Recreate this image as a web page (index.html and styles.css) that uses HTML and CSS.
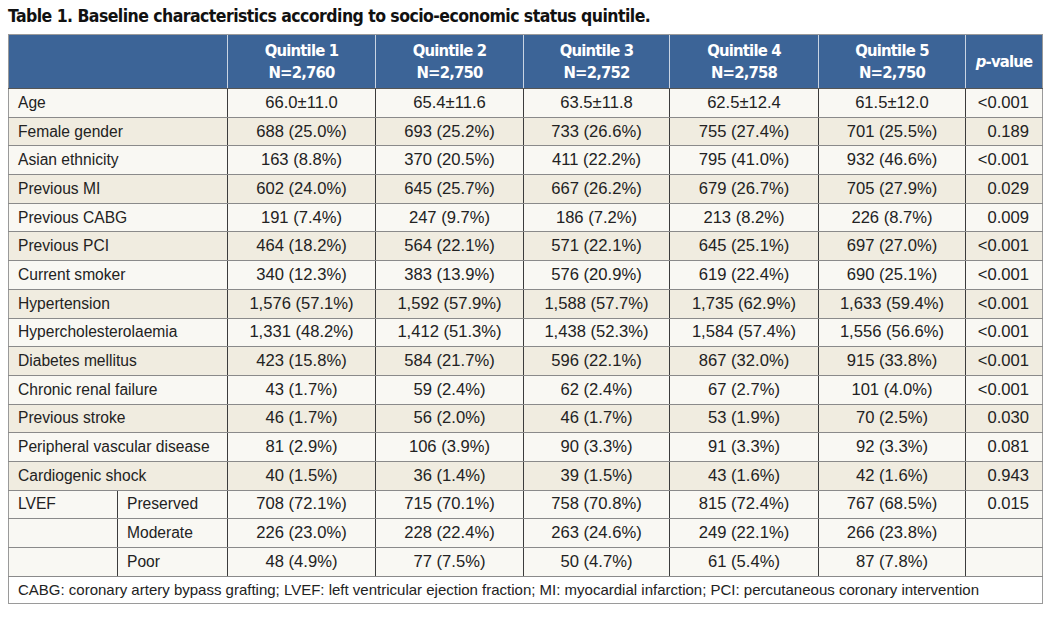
FILE: index.html
```html
<!DOCTYPE html>
<html>
<head>
<meta charset="utf-8">
<link rel="stylesheet" href="styles.css">
</head>
<body>
<h1 class="title">Table 1. Baseline characteristics according to socio-economic status quintile.</h1>
<table class="data">
<colgroup>
<col class="c-sub1"><col class="c-sub2"><col class="c-q"><col class="c-q"><col class="c-q3"><col class="c-q4"><col class="c-q5"><col class="c-p">
</colgroup>
<thead>
<tr class="head">
<th colspan="2"></th>
<th>Quintile 1<br>N=2,760</th>
<th>Quintile 2<br>N=2,750</th>
<th>Quintile 3<br>N=2,752</th>
<th>Quintile 4<br>N=2,758</th>
<th>Quintile 5<br>N=2,750</th>
<th><i>p</i>-value</th>
</tr>
</thead>
<tbody>
<tr class="lt"><td colspan="2" class="lab">Age</td><td>66.0±11.0</td><td>65.4±11.6</td><td>63.5±11.8</td><td>62.5±12.4</td><td>61.5±12.0</td><td class="p">&lt;0.001</td></tr>
<tr class="dk"><td colspan="2" class="lab">Female gender</td><td>688 (25.0%)</td><td>693 (25.2%)</td><td>733 (26.6%)</td><td>755 (27.4%)</td><td>701 (25.5%)</td><td class="p">0.189</td></tr>
<tr class="lt"><td colspan="2" class="lab">Asian ethnicity</td><td>163 (8.8%)</td><td>370 (20.5%)</td><td>411 (22.2%)</td><td>795 (41.0%)</td><td>932 (46.6%)</td><td class="p">&lt;0.001</td></tr>
<tr class="dk"><td colspan="2" class="lab">Previous MI</td><td>602 (24.0%)</td><td>645 (25.7%)</td><td>667 (26.2%)</td><td>679 (26.7%)</td><td>705 (27.9%)</td><td class="p">0.029</td></tr>
<tr class="lt"><td colspan="2" class="lab">Previous CABG</td><td>191 (7.4%)</td><td>247 (9.7%)</td><td>186 (7.2%)</td><td>213 (8.2%)</td><td>226 (8.7%)</td><td class="p">0.009</td></tr>
<tr class="dk"><td colspan="2" class="lab">Previous PCI</td><td>464 (18.2%)</td><td>564 (22.1%)</td><td>571 (22.1%)</td><td>645 (25.1%)</td><td>697 (27.0%)</td><td class="p">&lt;0.001</td></tr>
<tr class="lt"><td colspan="2" class="lab">Current smoker</td><td>340 (12.3%)</td><td>383 (13.9%)</td><td>576 (20.9%)</td><td>619 (22.4%)</td><td>690 (25.1%)</td><td class="p">&lt;0.001</td></tr>
<tr class="dk"><td colspan="2" class="lab">Hypertension</td><td>1,576 (57.1%)</td><td>1,592 (57.9%)</td><td>1,588 (57.7%)</td><td>1,735 (62.9%)</td><td>1,633 (59.4%)</td><td class="p">&lt;0.001</td></tr>
<tr class="lt"><td colspan="2" class="lab">Hypercholesterolaemia</td><td>1,331 (48.2%)</td><td>1,412 (51.3%)</td><td>1,438 (52.3%)</td><td>1,584 (57.4%)</td><td>1,556 (56.6%)</td><td class="p">&lt;0.001</td></tr>
<tr class="dk"><td colspan="2" class="lab">Diabetes mellitus</td><td>423 (15.8%)</td><td>584 (21.7%)</td><td>596 (22.1%)</td><td>867 (32.0%)</td><td>915 (33.8%)</td><td class="p">&lt;0.001</td></tr>
<tr class="lt"><td colspan="2" class="lab">Chronic renal failure</td><td>43 (1.7%)</td><td>59 (2.4%)</td><td>62 (2.4%)</td><td>67 (2.7%)</td><td>101 (4.0%)</td><td class="p">&lt;0.001</td></tr>
<tr class="dk"><td colspan="2" class="lab">Previous stroke</td><td>46 (1.7%)</td><td>56 (2.0%)</td><td>46 (1.7%)</td><td>53 (1.9%)</td><td>70 (2.5%)</td><td class="p">0.030</td></tr>
<tr class="lt"><td colspan="2" class="lab">Peripheral vascular disease</td><td>81 (2.9%)</td><td>106 (3.9%)</td><td>90 (3.3%)</td><td>91 (3.3%)</td><td>92 (3.3%)</td><td class="p">0.081</td></tr>
<tr class="dk"><td colspan="2" class="lab">Cardiogenic shock</td><td>40 (1.5%)</td><td>36 (1.4%)</td><td>39 (1.5%)</td><td>43 (1.6%)</td><td>42 (1.6%)</td><td class="p">0.943</td></tr>
<tr class="lt"><td class="lab">LVEF</td><td class="lab">Preserved</td><td>708 (72.1%)</td><td>715 (70.1%)</td><td>758 (70.8%)</td><td>815 (72.4%)</td><td>767 (68.5%)</td><td class="p">0.015</td></tr>
<tr class="lt"><td class="lab"></td><td class="lab">Moderate</td><td>226 (23.0%)</td><td>228 (22.4%)</td><td>263 (24.6%)</td><td>249 (22.1%)</td><td>266 (23.8%)</td><td class="p"></td></tr>
<tr class="lt"><td class="lab"></td><td class="lab">Poor</td><td>48 (4.9%)</td><td>77 (7.5%)</td><td>50 (4.7%)</td><td>61 (5.4%)</td><td>87 (7.8%)</td><td class="p"></td></tr>
</tbody>
<tfoot>
<tr class="foot"><td colspan="8">CABG: coronary artery bypass grafting; LVEF: left ventricular ejection fraction; MI: myocardial infarction; PCI: percutaneous coronary intervention</td></tr>
</tfoot>
</table>
</body>
</html>
```
FILE: styles.css
```css
html, body {
  margin: 0;
  padding: 0;
  background: #ffffff;
}
body {
  padding: 0 8px;
  font-family: "Liberation Sans", Arial, sans-serif;
  color: #222222;
}
.title {
  margin: 0;
  padding-top: 5px;
  height: 28px;
  box-sizing: border-box;
  font-family: "DejaVu Sans Condensed", "DejaVu Sans", sans-serif;
  font-stretch: condensed;
  font-weight: bold;
  font-size: 17.5px;
  line-height: 22px;
  letter-spacing: -0.55px;
  color: #111111;
}
.data {
  border-collapse: collapse;
  table-layout: fixed;
  width: 1034px;
  margin-top: 6px;
  border: 1px solid #9a9a9a;
  font-size: 16.6px;
}
.c-sub1 { width: 109px; }
.c-sub2 { width: 110px; }
.c-q { width: 148px; }
.c-q3 { width: 146px; }
.c-q4 { width: 149px; }
.c-q5 { width: 147px; }
.c-p { width: 77px; }
.head th {
  background: #3c6497;
  color: #ffffff;
  height: 53px;
  padding: 0;
  font-family: "DejaVu Sans Condensed", "DejaVu Sans", sans-serif;
  font-stretch: condensed;
  font-weight: bold;
  font-size: 16.5px;
  line-height: 22px;
  letter-spacing: -0.8px;
  text-align: center;
  border-left: 1px solid #c9d4e3;
  border-top: 1px solid #9a9a9a;
  border-bottom: 1px solid #555555;
}
.head th:first-child {
  border-left: 1px solid #9a9a9a;
}
.head th i {
  font-style: italic;
}
tbody td {
  height: 27.7px;
  padding: 0;
  text-align: center;
  border-left: 1px solid #3c3c3c;
  border-bottom: 1px solid #8a8a8a;
  line-height: 18px;
  white-space: nowrap;
}
tbody td:first-child {
  border-left: 1px solid #9a9a9a;
}
tbody td.lab {
  text-align: left;
  padding-left: 9px;
  font-size: 15.6px;
}
tbody td.p {
  text-align: right;
  padding-right: 13px;
}
tr.lt td { background: #f9f8f3; }
tr.dk td { background: #f0ece0; }
.foot td {
  height: 26px;
  padding: 0 0 0 9px;
  background: #ffffff;
  text-align: left;
  border-top: 1px solid #8a8a8a;
  font-size: 15px;
  white-space: nowrap;
}
```
